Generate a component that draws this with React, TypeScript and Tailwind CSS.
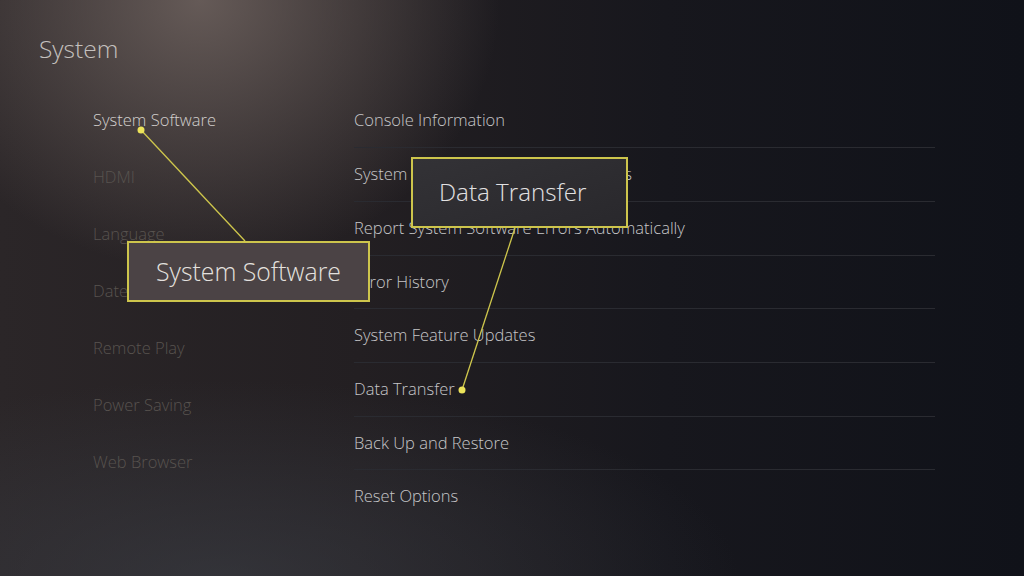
import React from "react";

const leftItems = [
  { label: "System Software", active: true },
  { label: "HDMI" },
  { label: "Language" },
  { label: "Date and Time" },
  { label: "Remote Play" },
  { label: "Power Saving" },
  { label: "Web Browser" },
];

const rightItems = [
  "Console Information",
  "System Software Update and Settings",
  "Report System Software Errors Automatically",
  "Error History",
  "System Feature Updates",
  "Data Transfer",
  "Back Up and Restore",
  "Reset Options",
];

export default function App() {
  return (
    <div
      className="relative w-[1024px] h-[576px] overflow-hidden bg-[#1b191d] bg-[image:radial-gradient(ellipse_300px_270px_at_200px_0px,rgba(112,100,96,0.85),transparent),radial-gradient(ellipse_520px_200px_at_220px_580px,rgba(62,66,74,0.55),transparent),linear-gradient(90deg,#2b2628_0%,#231f22_35%,#17171d_65%,#101219_100%)]"
      style={{ fontFamily: '"Open Sans", "Noto Sans", sans-serif' }}
    >
      <div className="pl-[39px] pt-[33px] text-[24.5px] leading-[32px] font-light text-[#c4c0be]">
        System
      </div>

      <div className="flex mt-[27px]">
        <div className="w-[354px] pl-[93px] flex flex-col">
          {leftItems.map((it) => (
            <div
              key={it.label}
              className={
                "h-[57px] flex items-center text-[16.5px] font-light whitespace-nowrap " +
                (it.active ? "text-[#d2cfcd]" : "text-[#58534f]")
              }
            >
              {it.label}
            </div>
          ))}
        </div>
        <div className="w-[581px] mt-[1.5px] flex flex-col">
          {rightItems.map((label, i) => (
            <div
              key={label}
              className={
                "h-[53.7px] flex items-center text-[16.5px] font-light text-[#c6c6c8] whitespace-nowrap " +
                (i > 0 ? "border-t border-[#2a2b31]" : "")
              }
            >
              {label}
            </div>
          ))}
        </div>
      </div>

      {/* callout lines */}
      <svg
        className="absolute inset-0 pointer-events-none"
        width="1024"
        height="576"
        viewBox="0 0 1024 576"
      >
        <line x1="141" y1="130" x2="245" y2="241" stroke="#cfc74c" strokeWidth="1.3" />
        <circle cx="141" cy="130" r="3.5" fill="#ece35a" />
        <line x1="515" y1="228" x2="462" y2="390" stroke="#cfc74c" strokeWidth="1.3" />
        <circle cx="462" cy="390" r="3.5" fill="#ece35a" />
      </svg>

      {/* System Software callout */}
      <div className="absolute left-[127px] top-[241px] w-[243px] h-[61px] border-2 border-[#cdc54c] bg-[#4b4345] flex items-center justify-center text-[24.8px] font-light text-[#e4e1df] whitespace-nowrap">
        System Software
      </div>

      {/* Data Transfer callout */}
      <div className="absolute left-[411px] top-[157px] w-[217px] h-[71px] border-2 border-[#cdc54c] bg-[#2c2b2f] bg-[image:linear-gradient(160deg,#333236,#29282c)] flex items-center pl-[26px] text-[24.2px] font-light text-[#e2e1e2] whitespace-nowrap">
        Data Transfer
      </div>
    </div>
  );
}
